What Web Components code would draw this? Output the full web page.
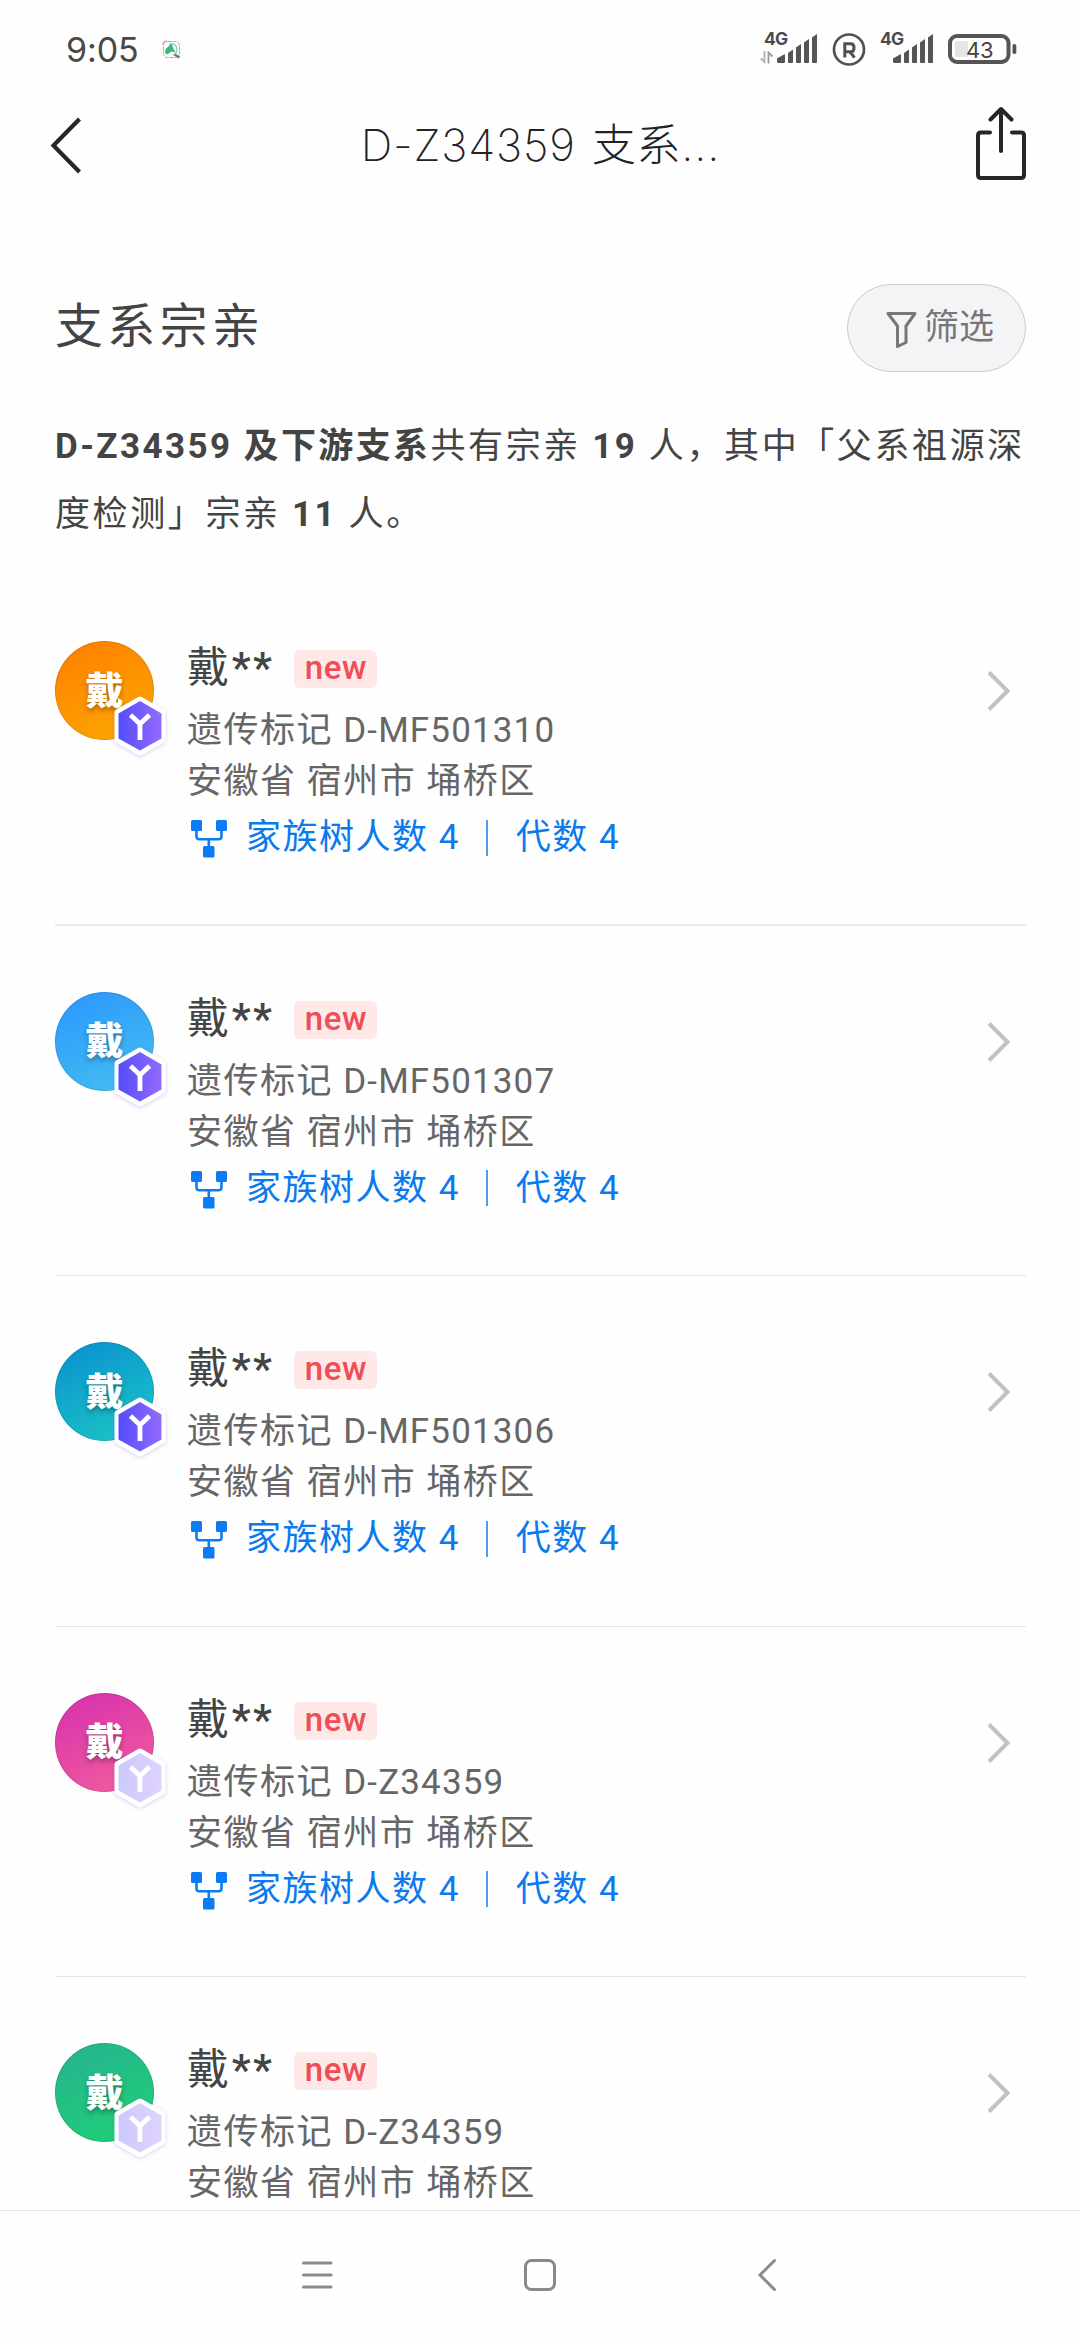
<!DOCTYPE html>
<html lang="zh-CN">
<head>
<meta charset="utf-8">
<title>支系宗亲</title>
<style>
html,body{margin:0;background:#fefefe}
body{font-family:Roboto,"Noto Sans CJK SC",sans-serif;width:1080px;height:2340px;overflow:hidden}
</style>
</head>
<body>
<clan-screen></clan-screen>
<script>
const define=(name,render)=>customElements.define(name,class extends HTMLElement{
  connectedCallback(){if(!this.shadowRoot)this.attachShadow({mode:'open'}).innerHTML=render(this)}
});

define('signal-bars',()=>`
<style>
:host{display:flex;width:58px;height:34px;position:relative}
svg{display:block;margin-left:auto}
span{position:absolute;left:4px;top:-2px;font:700 17.5px/17px Inter,Roboto,sans-serif;color:#4b4b4b;letter-spacing:-.8px}
.ar{position:absolute;left:0;top:19px;margin:0}
:host([idle]) .ar{display:none}
</style>
<svg width="42" height="34" viewBox="0 0 42 34" fill="#555"><path d="M1 26.5 8 22.500Q9 22 9 23V29.500Q9 31 8 31H2.500Q1 31 1 29.500zM12 21l5-3.500V30q0 1-1 1h-3q-1 0-1-1zM20 15.500l5-3.500V30q0 1-1 1h-3q-1 0-1-1zM28 10.500l5-3.500V30q0 1-1 1h-3q-1 0-1-1zM36 5.500l5-3.500V30q0 1-1 1h-3q-1 0-1-1z"/></svg>
<span>4G</span>
<svg class="ar" width="14" height="13" viewBox="0 0 14 13" fill="none" stroke="#b0b0b0" stroke-width="1.800"><path d="M4.500 0V11L.8 7.500"/><path d="M8.500 12.500V1.500L12.500 5.500" stroke="#999"/></svg>`);

define('status-bar',()=>`
<style>
:host{display:flex;box-sizing:border-box;height:98px;padding:32px 62px 0 66px;color:#484848}
.t{font:400 34px/35px Inter,Roboto,sans-serif;letter-spacing:-.1px}
.app{margin:8px 0 0 23px}
.r{margin-left:auto;display:flex}
.reg{margin:1px 0 0 14px}
.second{margin-left:10px}
.bat{margin:2px 0 0 14px}
</style>
<div class="t">9:05</div>
<svg class="app" width="19" height="19" viewBox="0 0 19 19" fill="none"><rect x="1.500" y="1.500" width="16" height="16" rx="4" stroke="#9fb3a8" stroke-dasharray="4 1"/><path d="M1 5Q1 1 5 1" stroke="#e8a9b8" stroke-width="1.500"/><path d="M3 13Q3 8 6 7L9 2.500l2.500 6 2 4-4-1-4 3z" fill="#3dba78"/><path d="M9 4q6 0 6 5t-4 6" stroke="#8ad3a8" stroke-width="1.300"/><path d="M12.500 14.500l5 3" stroke="#777" stroke-width="2.500"/></svg>
<div class="r">
<signal-bars></signal-bars>
<svg class="reg" width="34" height="34" viewBox="0 0 34 34" fill="none" stroke="#505050"><circle cx="17" cy="16.500" r="15" stroke-width="2.700"/><path d="M12.800 24.500V10.800H19Q22 10.800 22 14.800T19 18.800H13M18 19l4.500 5.500" stroke-width="3"/></svg>
<signal-bars class="second" idle></signal-bars>
<svg class="bat" width="70" height="30" viewBox="0 0 70 30"><rect x="2" y="2" width="58.500" height="26" rx="7" fill="none" stroke="#555" stroke-width="4"/><rect x="7" y="7" width="13" height="16" rx="2" fill="#e5e5e5"/><rect x="64.500" y="10" width="3.800" height="10" rx="1.800" fill="#555"/><text x="18" y="23.500" font-family="Inter,Roboto,sans-serif" font-size="22" letter-spacing="-.3" fill="#444">43</text></svg>
</div>`);

define('nav-header',()=>`
<style>
:host{display:flex;align-items:center;justify-content:space-between;box-sizing:border-box;height:96px;padding:0 52px 0 49px}
svg{display:block}
.title{font:250 44px/60px Inter,"Noto Sans CJK SC",sans-serif;color:#222;white-space:pre;letter-spacing:.8px;word-spacing:3px;padding-left:6px;margin-top:-3px}
.share{margin-top:-10px}
</style>
<svg width="52" height="60" viewBox="0 0 52 60" fill="none" stroke="#262626" stroke-width="4.200"><path d="M30.500 3 4.500 29.500l26 26.500"/></svg>
<div class="title"><slot></slot></div>
<svg class="share" width="54" height="78" viewBox="0 0 54 78" fill="none" stroke="#262626" stroke-width="4" stroke-linecap="round" stroke-linejoin="round"><path d="M16 30.500H7Q4 30.500 4 33.500V73Q4 76 7 76H47Q50 76 50 73V33.500Q50 30.500 47 30.500H38M27 49V7M16.500 17.500 27 7l10.500 10.500"/></svg>`);

define('filter-button',()=>`
<style>
:host{display:flex;align-items:center;box-sizing:border-box;width:179px;height:88px;border:1px solid #c9cacd;border-radius:44px;background:#f4f4f7;padding-left:37px;color:#777;font-size:35px;line-height:50px}
svg{margin:3px 6px 0 0}
</style>
<svg width="33" height="38" viewBox="0 0 33 38" fill="none" stroke="#777" stroke-width="3" stroke-linejoin="round"><path d="M3 2.500H30L21 15V31.500L12.500 35.500V15z"/></svg><slot></slot>`);

define('summary-head',()=>`
<style>
:host{display:block;padding:90px 54px 0 55px;color:#444}
.row{display:flex;justify-content:space-between;align-items:center;height:88px}
.h{font-size:48px;line-height:70px;letter-spacing:4.300px;margin-top:-3px}
p{margin:41px -20px 0 0;font-size:35px;line-height:68px;letter-spacing:2.600px;white-space:nowrap}
p b:first-child{letter-spacing:2.400px}
</style>
<div class="row"><div class="h">支系宗亲</div><filter-button>筛选</filter-button></div>
<p><b>D-Z34359 及下游支系</b>共有宗亲 <b>19</b> 人，其中「父系祖源深<br>度检测」宗亲 <b>11</b> 人。</p>`);

define('y-badge',e=>`
<style>
:host{display:block;width:60px;height:66px}
.g{opacity:${e.hasAttribute('dim')?.3:1}}
svg{display:block;filter:drop-shadow(0 1px 2px rgba(110,90,230,.28))}
</style>
<svg width="60" height="66" viewBox="0 0 60 66"><defs><linearGradient id="g"><stop stop-color="#544dfb"/><stop offset="1" stop-color="#946bff"/></linearGradient></defs>
<path d="M30 7 52 19.500V46.500L30 59 8 46.500V19.500z" fill="#fff" stroke="#fff" stroke-width="7" stroke-linejoin="round"/>
<path class="g" d="M30 8 51.500 20.500V45.500L30 57.500 8.500 45.500V20.500z" fill="url(#g)"/>
<path d="M20.500 22 30 31l9.500-9M30 30V47" fill="none" stroke="#fff" stroke-width="4.800"/></svg>`);

define('user-avatar',e=>`
<style>
:host{display:flex;position:relative;width:99px;height:99px;border-radius:50%;align-items:center;justify-content:center;background:linear-gradient(155deg,${e.getAttribute('from')},${e.getAttribute('to')});box-shadow:inset 0 0 0 1px rgba(0,0,0,.1);color:#fff;font-weight:900;font-size:38px;line-height:50px;text-shadow:0 3px 5px rgba(0,0,0,.3)}
slot{display:block}
y-badge{position:absolute;left:55px;top:52px;text-shadow:none}
</style>
<slot></slot><y-badge ${e.hasAttribute('dim')?'dim':''}></y-badge>`);

define('clan-row',e=>`
<style>
:host{display:flex;box-sizing:border-box;height:350.5px;border-bottom:1px solid #e5e5e5;padding-top:66px;margin:0 54px 0 55px}
:host(:first-child){border-bottom:2px solid #ebebeb}
.c{margin-left:33px;width:500px;font-size:35px;letter-spacing:1.500px;color:#666;line-height:51px;white-space:nowrap}
.n{display:flex;height:53px;font-size:42px;line-height:54px;letter-spacing:1.750px;color:#444}
.n b{font-weight:600;letter-spacing:2.500px;margin-left:1px}
.tag{margin:9px 0 0 20px;box-sizing:border-box;width:83px;height:38px;border-radius:6px;background:#fee8e8;color:#ee4e55;font-weight:500;font-size:33px;line-height:36px;letter-spacing:.6px;text-align:center}
.m{margin-top:11px}
.m slot{letter-spacing:1.150px}
.f{display:flex;align-items:center;color:#0a7aee;height:61px}
.f svg{margin:3px 18px 0 3px}
.f i{width:2px;height:36px;background:#4d9df0;margin:0 28px 0 26px}
.arrow{margin:29px 15px 0 auto}
</style>
<user-avatar from="${e.getAttribute('from')}" to="${e.getAttribute('to')}" ${e.hasAttribute('dim')?'dim':''}>戴</user-avatar>
<div class="c">
<div class="n"><span>戴<b>**</b></span><span class="tag">new</span></div>
<div class="m">遗传标记 <slot></slot></div>
<div>安徽省 宿州市 埇桥区</div>
${e.hasAttribute('brief')?'':`<div class="f"><svg width="38" height="38" viewBox="0 0 38 38" fill="#0a7cf5"><rect x="1" y="0" width="11" height="11" rx="1.500"/><rect x="26" y="0" width="11" height="11" rx="1.500"/><rect x="13" y="26" width="11.500" height="11.500" rx="1.500"/><path d="M6.500 10V16.500Q6.500 19.300 9.500 19.300H28.500Q31.500 19.300 31.500 16.500V10M18.800 19V27" fill="none" stroke="#0a7cf5" stroke-width="2.600"/></svg><span>家族树人数 4</span><i></i><span>代数 4</span></div>`}
</div>
<svg class="arrow" width="26" height="42" viewBox="0 0 26 42" fill="none" stroke="#c2c2c6" stroke-width="4"><path d="M4 2.500 22.500 21 4 39.500"/></svg>`);

define('system-nav',()=>`
<style>
:host{display:flex;box-sizing:border-box;height:130px;border-top:1px solid #e2e2e2;background:#fefefe;justify-content:center;gap:188px;padding-top:46px}
svg{display:block}
</style>
<svg width="36" height="36" viewBox="0 0 36 36" stroke="#8a8a8a" stroke-width="3" stroke-linecap="round"><path d="M5.500 6H33M5.500 18H33M5.500 30H33"/></svg>
<svg width="36" height="36" viewBox="0 0 36 36" fill="none" stroke="#8a8a8a" stroke-width="3"><rect x="3.500" y="3.500" width="29" height="29" rx="6"/></svg>
<svg width="36" height="36" viewBox="0 0 36 36" fill="none" stroke="#8a8a8a" stroke-width="3" stroke-linecap="round"><path d="M28.500 3.500 14 18 28.500 32.500"/></svg>`);

define('clan-screen',()=>`
<style>
:host{display:flex;flex-direction:column;height:2340px;overflow:hidden}
main{flex:1;min-height:0;overflow:hidden}
.list{padding-top:26px}
</style>
<status-bar></status-bar>
<nav-header>D-Z34359 支系...</nav-header>
<main>
<summary-head></summary-head>
<div class="list">
<clan-row from="#ff7e00" to="#fda900">D-MF501310</clan-row>
<clan-row from="#2b95ff" to="#45c2ee">D-MF501307</clan-row>
<clan-row from="#0a8fd0" to="#1cc8c4">D-MF501306</clan-row>
<clan-row dim from="#d62fae" to="#f4609c">D-Z34359</clan-row>
<clan-row dim brief from="#26b291" to="#20d074">D-Z34359</clan-row>
</div>
</main>
<system-nav></system-nav>`);
</script>
</body>
</html>
